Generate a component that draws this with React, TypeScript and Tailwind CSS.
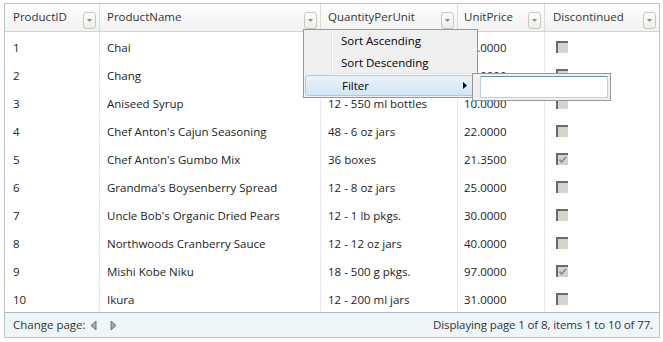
import React from "react";

type Product = {
  id: number;
  name: string;
  qty: string;
  price: string;
  discontinued: boolean;
};

const products: Product[] = [
  { id: 1, name: "Chai", qty: "10 boxes x 20 bags", price: "18.0000", discontinued: false },
  { id: 2, name: "Chang", qty: "24 - 12 oz bottles", price: "19.0000", discontinued: false },
  { id: 3, name: "Aniseed Syrup", qty: "12 - 550 ml bottles", price: "10.0000", discontinued: false },
  { id: 4, name: "Chef Anton's Cajun Seasoning", qty: "48 - 6 oz jars", price: "22.0000", discontinued: false },
  { id: 5, name: "Chef Anton's Gumbo Mix", qty: "36 boxes", price: "21.3500", discontinued: true },
  { id: 6, name: "Grandma's Boysenberry Spread", qty: "12 - 8 oz jars", price: "25.0000", discontinued: false },
  { id: 7, name: "Uncle Bob's Organic Dried Pears", qty: "12 - 1 lb pkgs.", price: "30.0000", discontinued: false },
  { id: 8, name: "Northwoods Cranberry Sauce", qty: "12 - 12 oz jars", price: "40.0000", discontinued: false },
  { id: 9, name: "Mishi Kobe Niku", qty: "18 - 500 g pkgs.", price: "97.0000", discontinued: true },
  { id: 10, name: "Ikura", qty: "12 - 200 ml jars", price: "31.0000", discontinued: false },
];

// column widths incl. the 1px separator on the right
const columns = [
  { title: "ProductID", width: "w-[95px]", pad: "pl-[8px]" },
  { title: "ProductName", width: "w-[221px]", pad: "pl-[7px]" },
  { title: "QuantityPerUnit", width: "w-[137px]", pad: "pl-[7px]" },
  { title: "UnitPrice", width: "w-[87px]", pad: "pl-[6px]" },
  { title: "Discontinued", width: "w-[114px]", pad: "pl-[8px]" },
];

function HeaderButton() {
  return (
    <span className="mb-[2px] mr-[3px] flex h-[17px] w-[13px] shrink-0 items-start justify-center self-end rounded-[3px] border border-[#c8c8bd] bg-linear-to-b from-white to-[#ececE6] pt-[6px]">
      <svg width="5" height="3" viewBox="0 0 5 3">
        <path d="M0 0h5L2.5 3z" fill="#8c8c8c" />
      </svg>
    </span>
  );
}

function CheckBox({ checked }: { checked: boolean }) {
  return (
    <span className="relative mt-[2px] block h-[12px] w-[12px] border-l-2 border-t-2 border-l-[#6a6a6a] border-t-[#6a6a6a] bg-[#d6d3cc]">
      {checked && (
        <svg className="absolute left-[0px] top-[0px]" width="10" height="10" viewBox="0 0 10 10">
          <path d="M1.5 4.5l2 2.5 4.5-5" fill="none" stroke="#8a8a8a" strokeWidth="1.6" />
        </svg>
      )}
    </span>
  );
}

function PagerArrow({ dir }: { dir: "left" | "right" }) {
  return (
    <svg width="7" height="11" viewBox="0 0 7 11">
      {dir === "left" ? (
        <path d="M6 1v9L1 5.5z" fill="#a8a8a8" stroke="#747474" strokeWidth="1" strokeLinejoin="round" />
      ) : (
        <path d="M1 1v9l5-4.5z" fill="#a8a8a8" stroke="#747474" strokeWidth="1" strokeLinejoin="round" />
      )}
    </svg>
  );
}

function HeaderMenu() {
  return (
    <>
      <div className="absolute left-[303px] top-[29px] h-[69px] w-[175px] border border-[#979797] bg-[#f0f0f0]">
        <div className="absolute bottom-[1px] left-[27px] top-[1px] w-px bg-[#e2e3e3]" />
        <div className="absolute bottom-[1px] left-[28px] top-[1px] w-px bg-white" />
        <div className="relative flex h-[22px] items-center pl-[37px] text-black">Sort Ascending</div>
        <div className="relative flex h-[21px] items-center pl-[37px] text-black">Sort Descending</div>
        <div className="relative ml-[29px] h-px bg-[#e0e0e0]" />
        <div className="relative ml-[29px] h-px bg-white" />
        <div className="relative mx-[1px] flex h-[21px] items-center justify-between rounded-[3px] border border-[#a9cbe6] bg-linear-to-b from-[#eaf3fb] to-[#d2e5f4] pl-[36px] pr-[8px] text-black">
          <span>Filter</span>
          <svg width="4" height="7" viewBox="0 0 4 7">
            <path d="M0 0l4 3.5L0 7z" fill="#000" />
          </svg>
        </div>
      </div>
      <div className="absolute left-[472px] top-[73px] h-[28px] w-[139px] border border-[#979797] bg-[#f0f0f0] pl-[7px] pt-[2px]">
        <div className="h-[22px] w-[128px] border border-[#b9d1e8] border-t-[#5f8fbe] bg-white" />
      </div>
    </>
  );
}

export default function App() {
  return (
    <div className="relative h-[342px] w-[663px] overflow-hidden bg-white pl-[4px] pt-[3px] font-['Open_Sans',sans-serif] text-[11.5px] text-[#222]">
      <div className="w-[656px] border border-[#b8c3cc]">
        {/* header */}
        <div className="flex h-[28px] border-b border-[#d4d4d4] bg-linear-to-b from-white to-[#f1f1f1]">
          {columns.map((col, i) => (
            <div
              key={col.title}
              className={`flex ${col.width} ${col.pad} justify-between ${
                i < columns.length - 1 ? "border-r border-[#dcdcdc]" : ""
              }`}
            >
              <span className="-mt-[2px] self-center text-[#333]">{col.title}</span>
              <HeaderButton />
            </div>
          ))}
        </div>

        {/* rows */}
        {products.map((p) => (
          <div key={p.id} className="flex h-[28px] border-b border-white">
            <div className="flex w-[95px] items-center border-r border-[#e8e8e8] pl-[8px] pt-[4px]">{p.id}</div>
            <div className="flex w-[221px] items-center border-r border-[#e8e8e8] pl-[7px] pt-[4px]">{p.name}</div>
            <div className="flex w-[137px] items-center border-r border-[#e8e8e8] pl-[7px] pt-[4px]">{p.qty}</div>
            <div className="flex w-[87px] items-center border-r border-[#e8e8e8] pl-[6px] pt-[4px]">{p.price}</div>
            <div className="flex w-[114px] items-center pl-[11px]">
              <CheckBox checked={p.discontinued} />
            </div>
          </div>
        ))}

        {/* pager */}
        <div className="flex h-[25px] items-center justify-between border-t border-[#a9bccb] bg-[#eef6fa] pl-[8px] pr-[6px] text-[#333]">
          <div className="flex items-center">
            <span>Change page:</span>
            <span className="ml-[4px] flex items-center gap-[13px]">
              <PagerArrow dir="left" />
              <PagerArrow dir="right" />
            </span>
          </div>
          <span className="tracking-[-0.12px]">Displaying page 1 of 8, items 1 to 10 of 77.</span>
        </div>
      </div>

      <HeaderMenu />
    </div>
  );
}
